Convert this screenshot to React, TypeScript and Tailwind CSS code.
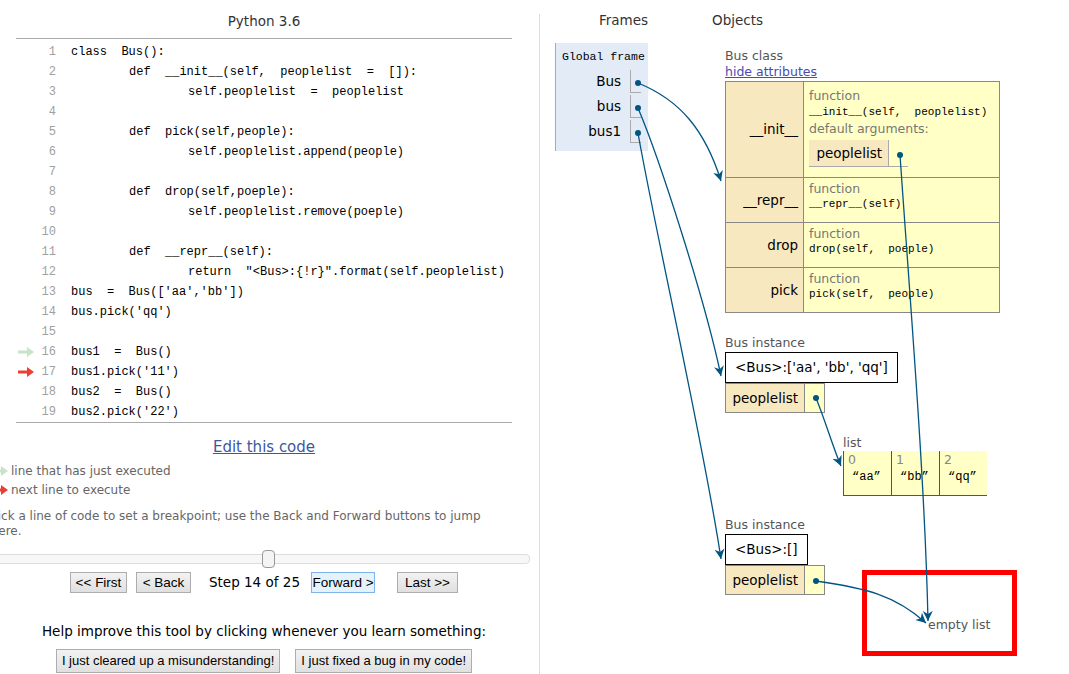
import React from "react";

const ui = { fontFamily: '"DejaVu Sans", Verdana, sans-serif' };
const mono = { fontFamily: '"Liberation Mono", "DejaVu Sans Mono", monospace' };
const arial = { fontFamily: '"Liberation Sans", Arial, sans-serif' };

const code: [number, string][] = [
  [0, "class  Bus():"],
  [1, "def  __init__(self,  peoplelist  =  []):"],
  [2, "self.peoplelist  =  peoplelist"],
  [0, ""],
  [1, "def  pick(self,people):"],
  [2, "self.peoplelist.append(people)"],
  [0, ""],
  [1, "def  drop(self,poeple):"],
  [2, "self.peoplelist.remove(poeple)"],
  [0, ""],
  [1, "def  __repr__(self):"],
  [2, 'return  "<Bus>:{!r}".format(self.peoplelist)'],
  [0, "bus  =  Bus(['aa','bb'])"],
  [0, "bus.pick('qq')"],
  [0, ""],
  [0, "bus1  =  Bus()"],
  [0, "bus1.pick('11')"],
  [0, "bus2  =  Bus()"],
  [0, "bus2.pick('22')"],
];

const indents = ["ml-[15px]", "ml-[73px]", "ml-[132px]"];

const Arrow = ({ color }: { color: string }) => (
  <svg width="16" height="10" viewBox="0 0 16 10">
    <path d="M0 3.5 H9 V0 L16 5 L9 10 V6.5 H0 Z" fill={color} />
  </svg>
);

const NavButton = ({ label, w, active }: { label: string; w: string; active?: boolean }) => (
  <button
    style={arial}
    className={
      "h-[21px] text-center text-[13.5px] leading-none text-black border " +
      w +
      " " +
      (active
        ? "border-[#7eb4ea] bg-[#e5f1fb]"
        : "border-[#adadad] bg-gradient-to-b from-[#f2f2f2] to-[#e0e0e0]")
    }
  >
    {label}
  </button>
);

const FuncRow = ({ name, sig, h }: { name: string; sig: string; h: string }) => (
  <div className={"flex border-t border-[#888] " + h}>
    <div className="w-[78px] shrink-0 bg-[#f8e8c0] border-r border-[#888] flex items-center justify-end pr-[5px] text-[13.5px] text-black">
      {name}
    </div>
    <div className="flex-1 bg-[#ffffc6] pl-[5px] pt-[3px]">
      <div className="text-[12.5px] leading-[16px] text-[#777]">function</div>
      <div style={mono} className="text-[11px] leading-[14px] text-black whitespace-pre">
        {sig}
      </div>
    </div>
  </div>
);

const PeopleRow = () => (
  <div className="flex w-[100px] h-[30px] border border-[#888]">
    <div className="w-[79px] bg-[#f8e8c0] border-r border-[#888] flex items-center justify-end pr-[6px] text-[13.5px] text-black">
      peoplelist
    </div>
    <div className="flex-1 bg-[#ffffc6]" />
  </div>
);

export default function App() {
  return (
    <div style={ui} className="relative w-[1069px] h-[674px] overflow-hidden bg-white flex text-black">
      {/* left: code + controls */}
      <div className="w-[540px] shrink-0 border-r border-[#ddd] mt-[14px] flex flex-col">
        <div className="mx-[16px] w-[496px] h-[24px] text-center text-[13.5px] text-[#333] leading-[14px]">
          Python 3.6
        </div>
        <div className="mx-[16px] w-[496px] border-t border-b border-[#aaa] pt-[3px]">
          {code.map(([lvl, txt], i) => (
            <div key={i} className="flex h-[20px] items-center">
              <div className="w-[20px] shrink-0 pl-[2px] flex items-center">
                {i === 15 && <Arrow color="#c8e3c8" />}
                {i === 16 && <Arrow color="#e93f34" />}
              </div>
              <div style={mono} className="w-[20px] shrink-0 text-right text-[12px] text-[#a0a0a0]">
                {i + 1}
              </div>
              <div style={mono} className={"text-[12px] whitespace-pre " + indents[lvl]}>
                {txt}
              </div>
            </div>
          ))}
        </div>

        <div className="w-[528px] mt-[15px] text-center text-[15px] leading-[18px]">
          <span className="underline text-[#3d58a2]">Edit this code</span>
        </div>

        <div className="-ml-[14px] w-[544px] mt-[5px] text-[12px] text-[#666]">
          <div className="flex items-center h-[19px] gap-[3px] pl-[6px]">
            <Arrow color="#c8e3c8" />
            <span>line that has just executed</span>
          </div>
          <div className="flex items-center h-[19px] gap-[3px] pl-[6px]">
            <Arrow color="#e93f34" />
            <span>next line to execute</span>
          </div>
          <p className="mt-[10px] leading-[15px] w-[510px]">
            Click a line of code to set a breakpoint; use the Back and Forward buttons to jump there.
          </p>
          <div className="relative mt-[15px] h-[10px] rounded-[4px] border border-[#ddd] bg-[#f7f7f7]">
            <div className="absolute left-[275px] -top-[5px] w-[13px] h-[18px] rounded-[4px] border border-[#999] bg-[#f4f4f4]" />
          </div>
        </div>

        <div className="w-[528px] mt-[8px] flex items-center justify-center">
          <NavButton label="<< First" w="w-[57px]" />
          <div className="w-[9px]" />
          <NavButton label="< Back" w="w-[55px]" />
          <span className="ml-[18px] mr-[11px] text-[13.5px]">Step 14 of 25</span>
          <NavButton label="Forward >" w="w-[64px]" active />
          <div className="w-[22px]" />
          <NavButton label="Last >>" w="w-[61px]" />
        </div>

        <div className="w-[528px] mt-[30px] text-center text-[13.5px] leading-[16px]">
          Help improve this tool by clicking whenever you learn something:
        </div>
        <div style={arial} className="w-[528px] mt-[10px] flex justify-center gap-[15px] text-[13px]">
          <button className="h-[24px] px-[5px] border border-[#adadad] bg-gradient-to-b from-[#f2f2f2] to-[#e0e0e0]">
            I just cleared up a misunderstanding!
          </button>
          <button className="h-[24px] px-[5px] border border-[#adadad] bg-gradient-to-b from-[#f2f2f2] to-[#e0e0e0]">
            I just fixed a bug in my code!
          </button>
        </div>
      </div>

      {/* right: frames + objects */}
      <div className="flex-1 pl-[15px] pt-[12px]">
        <div className="flex h-[31px] text-[13.5px] text-[#333] leading-[16px]">
          <span className="ml-[44px]">Frames</span>
          <span className="ml-[64px]">Objects</span>
        </div>
        <div className="flex">
          <div className="w-[93px] h-[108px] bg-[#e2ebf6] border-l border-[#aaa] pt-[6px]">
            <div style={mono} className="pl-[6px] text-[11.5px] leading-[16px] text-black">
              Global frame
            </div>
            <div className="mt-[4px] flex flex-col">
              {["Bus", "bus", "bus1"].map((n) => (
                <div key={n} className="flex h-[25px]">
                  <div className="w-[65px] text-right text-[13.5px] leading-[25px]">{n}</div>
                  <div className="ml-[9px] w-[11px] h-[23px] mt-[1px] border-l border-b border-[#aaa]" />
                </div>
              ))}
            </div>
          </div>

          <div className="ml-[77px] pt-[5px] flex flex-col">
            <div className="text-[12.5px] leading-[16px] text-[#555]">Bus class</div>
            <div className="text-[12.5px] leading-[16px] text-[#4a4ab0] underline">hide attributes</div>
            <div className="w-[275px] mt-[1px] border-l border-r border-b border-[#888]">
              <div className="flex border-t border-[#888] h-[96px]">
                <div className="w-[78px] shrink-0 bg-[#f8e8c0] border-r border-[#888] flex items-center justify-end pr-[5px] text-[13.5px]">
                  __init__
                </div>
                <div className="flex-1 bg-[#ffffc6] pl-[5px] pt-[6px]">
                  <div className="text-[12.5px] leading-[16px] text-[#777]">function</div>
                  <div style={mono} className="text-[11px] leading-[16px] whitespace-pre">
                    __init__(self,  peoplelist)
                  </div>
                  <div className="text-[12.5px] leading-[18px] text-[#777]">default arguments:</div>
                  <div className="flex mt-[2px]">
                    <div className="w-[80px] h-[27px] bg-[#f8e8c0] border-r border-b border-[#aaa] flex items-center justify-end pr-[6px] text-[13.5px]">
                      peoplelist
                    </div>
                    <div className="w-[19px] h-[27px] border-b border-[#aaa]" />
                  </div>
                </div>
              </div>
              <FuncRow name="__repr__" sig="__repr__(self)" h="h-[45px]" />
              <FuncRow name="drop" sig="drop(self,  poeple)" h="h-[45px]" />
              <FuncRow name="pick" sig="pick(self,  people)" h="h-[45px]" />
            </div>

            <div className="mt-[22px] text-[12.5px] leading-[16px] text-[#555]">Bus instance</div>
            <div className="self-start mt-[1px] h-[31px] px-[9px] border border-black flex items-center text-[13.5px]">
              {"<Bus>:['aa', 'bb', 'qq']"}
            </div>
            <PeopleRow />

            <div className="ml-[118px] mt-[22px] text-[12.5px] leading-[16px] text-[#555]">list</div>
            <div className="self-start ml-[118px] flex h-[45px] border-b border-[#555]">
              {["aa", "bb", "qq"].map((v, i) => (
                <div key={v} className="w-[48px] bg-[#ffffc6] border-l border-[#555] pl-[4px] pt-[1px]">
                  <div className="text-[12.5px] leading-[15px] text-[#888]">{i}</div>
                  <div style={mono} className="text-[12px] leading-[20px] pl-[4px]">
                    {"\u201c" + v + "\u201d"}
                  </div>
                </div>
              ))}
            </div>

            <div className="mt-[21px] text-[12.5px] leading-[16px] text-[#555]">Bus instance</div>
            <div className="self-start mt-[1px] h-[31px] px-[9px] border border-black flex items-center text-[13.5px]">
              {"<Bus>:[]"}
            </div>
            <PeopleRow />
          </div>
        </div>
      </div>

      {/* empty list object + red annotation */}
      <div className="absolute left-[928px] top-[617px] text-[12.5px] leading-[16px] text-[#555]">empty list</div>
      <div className="absolute left-[862px] top-[570px] w-[155px] h-[86px] border-[5px] border-[#ff0000]" />

      {/* pointer arrows */}
      <svg className="absolute inset-0 pointer-events-none" width="1069" height="674">
        <defs>
          <marker id="ah" markerWidth="12" markerHeight="12" refX="10" refY="5" orient="auto" markerUnits="userSpaceOnUse">
            <path d="M0,0 L10,5 L0,10 L3,5 Z" fill="#005583" />
          </marker>
        </defs>
        <g fill="none" stroke="#005583" strokeWidth="1.3" markerEnd="url(#ah)">
          <path d="M638,83 C680,100 705,130 721,181" />
          <path d="M638,108 C660,160 705,300 721,376" />
          <path d="M638,133 C655,230 705,450 721,559" />
          <path d="M900,155 C910,300 925,480 928,621" />
          <path d="M816,398 C825,420 834,450 841,466" />
          <path d="M816,581 C865,588 895,595 926,623" />
        </g>
        <g fill="#005583">
          <circle cx="638" cy="83" r="3" />
          <circle cx="638" cy="108" r="3" />
          <circle cx="638" cy="133" r="3" />
          <circle cx="900" cy="155" r="3" />
          <circle cx="816" cy="398" r="3" />
          <circle cx="816" cy="581" r="3" />
        </g>
      </svg>
    </div>
  );
}
